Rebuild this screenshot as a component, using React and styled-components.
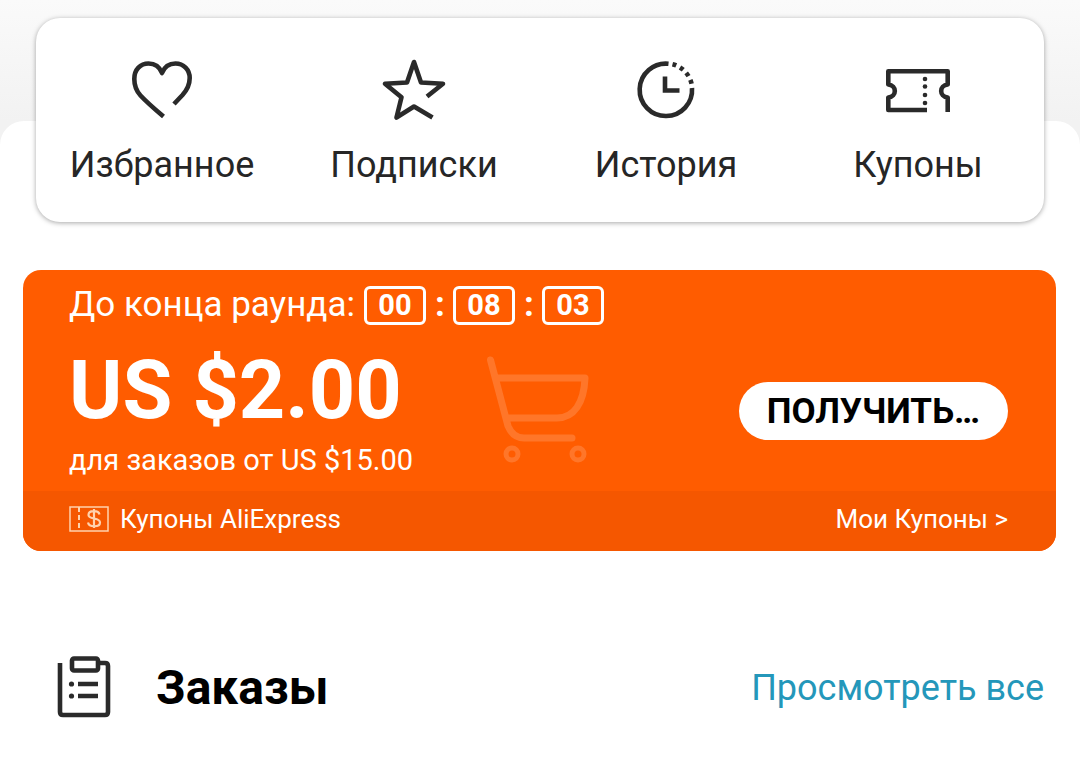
import styled, { createGlobalStyle } from "styled-components";

const GlobalStyle = createGlobalStyle`
  body {
    margin: 0;
    background-color: white;
    font-family: Roboto, "Noto Sans", sans-serif;
  }
`;

const Page = styled.main`
  padding-top: 121px;
  background: linear-gradient(#fafafa, #f2f2f2 121px);
`;

const Sheet = styled.div`
  display: flow-root;
  padding-bottom: 47px;
  border-radius: 24px 24px 0 0;
  background-color: white;
`;

const Shortcuts = styled.nav`
  display: grid;
  grid-template-columns: repeat(4, 1fr);
  margin: -103px 36px 0;
  padding: 36px 0 34px;
  border-radius: 24px;
  background-color: white;
  box-shadow: 0 1px 5px rgba(0, 0, 0, 0.35);
`;

const Shortcut = styled.a`
  display: flex;
  flex-direction: column;
  align-items: center;
  gap: 24px;
  color: #262626;
  font-size: 36px;
  line-height: 46px;
  text-decoration: none;
`;

const LineIcon = styled.svg`
  display: block;
  overflow: visible;
  fill: none;
  stroke: #2a2a2a;
  stroke-width: 4.6;
`;

const Banner = styled.section`
  margin: 48px 24px 0 23px;
  border-radius: 18px;
  overflow: hidden;
  background-color: #ff5c00;
  color: white;
`;

const BannerBody = styled.div`
  padding: 14px 48px 11px 46px;
`;

const Timer = styled.div`
  display: flex;
  align-items: center;
  gap: 9px;
  font-size: 35px;
  line-height: 42px;
`;

const Digits = styled.span`
  box-sizing: border-box;
  width: 62px;
  height: 39px;
  border: 3px solid white;
  border-radius: 6px;
  font-size: 29px;
  font-weight: 700;
  line-height: 33px;
  text-align: center;
`;

const Colon = styled.b`
  width: 9px;
  font-size: 35px;
  line-height: 38px;
  text-align: center;
`;

const Offer = styled.div`
  display: grid;
  grid-template-columns: 1fr auto 1fr;
  align-items: center;
  margin-top: 16px;
`;

const Amount = styled.div`
  font-size: 81px;
  font-weight: 700;
  line-height: 98px;
`;

const Condition = styled.div`
  font-size: 29px;
  line-height: 40px;
`;

const GetButton = styled.button`
  justify-self: end;
  height: 58px;
  padding: 0 28px;
  border: 0;
  border-radius: 29px;
  background-color: white;
  color: black;
  font-family: inherit;
  font-size: 35px;
  font-weight: 700;
`;

const BannerFooter = styled.div`
  display: flex;
  align-items: center;
  justify-content: space-between;
  padding: 12px 48px 16px 46px;
  background-color: #f55700;
  font-size: 26px;
  line-height: 32px;
`;

const CouponSource = styled.span`
  display: flex;
  align-items: center;
  gap: 11px;
`;

const BannerLink = styled.a`
  color: white;
  text-decoration: none;
`;

const Orders = styled.section`
  display: flex;
  align-items: center;
  margin: 105px 36px 0 56px;
`;

const OrdersTitle = styled.h2`
  flex: 1;
  margin: 0 0 0 44px;
  color: black;
  font-size: 48px;
  font-weight: 700;
  line-height: 64px;
`;

const ViewAll = styled.a`
  color: #2497ba;
  font-size: 36px;
  text-decoration: none;
`;

function HeartIcon() {
  return (
    <LineIcon width="64" height="64" viewBox="0 0 64 64" strokeLinejoin="round" aria-hidden="true">
      <path d="M33.5 62.5 C24 54.500 17 48.500 10.500 41.500 C6 36.500 4.300 30.500 4.300 25 C4.300 15.500 10.500 9.500 18.500 9.500 C24.500 9.500 29.500 12.500 32 19 C34.500 12.500 39.500 9.500 45.500 9.500 C53.500 9.500 59.700 15.500 59.700 24 C59.700 31 57 36 52.500 41 L44 50" />
    </LineIcon>
  );
}

function StarIcon() {
  return (
    <LineIcon width="64" height="64" viewBox="0 0 64 64" strokeLinejoin="round" aria-hidden="true">
      <path d="M50.500 63.500 L32 52.500 L14.500 63.500 L19.500 43.300 L3 29.700 L25 28.500 L32 8 L39 28.500 L61 29.700 L45 42.500" />
    </LineIcon>
  );
}

function HistoryIcon() {
  return (
    <LineIcon width="64" height="64" viewBox="0 0 64 64" aria-hidden="true">
      <path d="M34.500 9.800 A26.200 26.200 0 1 0 58 34" />
      <path d="M38.500 10.200 A26.200 26.200 0 0 1 57.800 31" strokeDasharray="4 4.200" />
      <path d="M31 22.500 V36.500 H45.500" />
    </LineIcon>
  );
}

function CouponIcon() {
  return (
    <LineIcon width="64" height="64" viewBox="0 0 64 64" strokeLinejoin="round" aria-hidden="true">
      <path d="M41 56 H2.300 V43.500 C11 42.500 11 31.500 2.300 30.500 V17.300 H61.700 V30.500 C53 31.500 53 42.500 61.700 43.500 V58" />
      <g fill="#2a2a2a" stroke="none">
        <circle cx="39" cy="25" r="2.300" />
        <circle cx="39" cy="32.500" r="2.300" />
        <circle cx="39" cy="41" r="2.300" />
        <circle cx="39" cy="49" r="2.300" />
      </g>
    </LineIcon>
  );
}

function CartIcon() {
  return (
    <svg
      width="104"
      height="110"
      viewBox="1 1 104 110"
      fill="none"
      stroke="#ff7629"
      strokeWidth="7"
      strokeLinecap="round"
      strokeLinejoin="round"
      aria-hidden="true"
    >
      <path d="M4.500 5 L22 71 Q27 83 38 83 H86 M12 23 H99 C98 48 88 63 71 63 H22" />
      <circle cx="26" cy="99" r="6" strokeWidth="5" />
      <circle cx="92" cy="99" r="6" strokeWidth="5" />
    </svg>
  );
}

function CashCouponIcon() {
  return (
    <svg width="40" height="26" viewBox="0 0 40 26" fill="none" stroke="#ffd2ad" aria-hidden="true">
      <rect x="1" y="1" width="38" height="24" strokeWidth="1.500" />
      <path d="M10 1 V25" strokeWidth="2" strokeDasharray="5 3" />
      <path d="M30.500 8.500 C29.500 4 19.500 4 19.500 9 C19.500 14 31 11 31 16.500 C31 21.500 20 21.500 19 16.500 M25 3 V22" strokeWidth="2.200" />
    </svg>
  );
}

function ClipboardIcon() {
  return (
    <LineIcon width="56" height="62" viewBox="0 1 56 62" strokeLinejoin="round" aria-hidden="true">
      <path d="M4 7 V56 Q4 59 7 59 H49 Q52 59 52 56 V10 Q52 7 49 7 H42" />
      <rect x="16" y="2.500" width="26" height="12" rx="2" />
      <path d="M22 28 H42 M22 40 H42" />
      <g fill="#2a2a2a" stroke="none">
        <circle cx="15.500" cy="28" r="2.600" />
        <circle cx="15.500" cy="40" r="2.600" />
      </g>
    </LineIcon>
  );
}

const shortcuts = [
  { label: "Избранное", Icon: HeartIcon },
  { label: "Подписки", Icon: StarIcon },
  { label: "История", Icon: HistoryIcon },
  { label: "Купоны", Icon: CouponIcon },
];

function App() {
  return (
    <>
      <GlobalStyle />
      <Page>
        <Sheet>
          <Shortcuts>
            {shortcuts.map(({ label, Icon }) => (
              <Shortcut href="#" key={label}>
                <Icon />
                {label}
              </Shortcut>
            ))}
          </Shortcuts>
          <Banner>
            <BannerBody>
              <Timer>
                <span>До конца раунда:</span>
                <Digits>00</Digits>
                <Colon>:</Colon>
                <Digits>08</Digits>
                <Colon>:</Colon>
                <Digits>03</Digits>
              </Timer>
              <Offer>
                <div>
                  <Amount>US $2.00</Amount>
                  <Condition>для заказов от US $15.00</Condition>
                </div>
                <CartIcon />
                <GetButton type="button">ПОЛУЧИТЬ…</GetButton>
              </Offer>
            </BannerBody>
            <BannerFooter>
              <CouponSource>
                <CashCouponIcon />
                Купоны AliExpress
              </CouponSource>
              <BannerLink href="#">Мои Купоны &gt;</BannerLink>
            </BannerFooter>
          </Banner>
          <Orders>
            <ClipboardIcon />
            <OrdersTitle>Заказы</OrdersTitle>
            <ViewAll href="#">Просмотреть все</ViewAll>
          </Orders>
        </Sheet>
      </Page>
    </>
  );
}

export default App;
